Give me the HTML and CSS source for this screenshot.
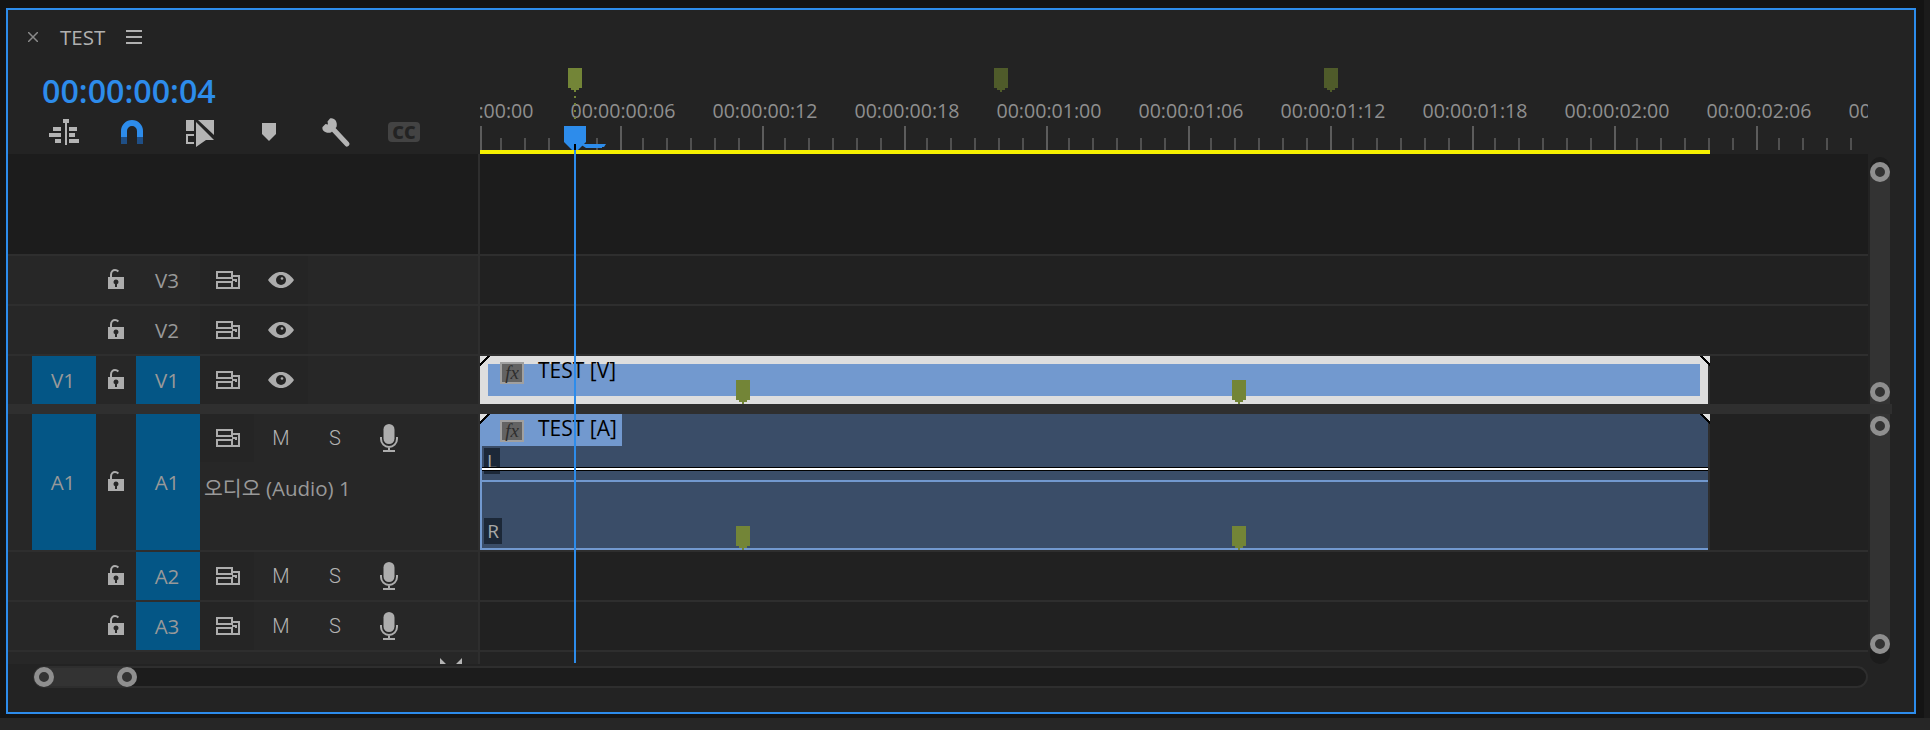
FILE: index.html
```html
<!DOCTYPE html>
<html lang="en">
<head>
    <meta charset="UTF-8">
    <meta name="viewport" content="width=device-width, initial-scale=1.0">
    <title>TEST - Timeline</title>
    <link rel="stylesheet" href="styles.css">
</head>
<body>

    <svg class="sprite" aria-hidden="true">
        <symbol id="i-lock" viewBox="0 0 16 20">
            <path d="M3 9V5.5C3 2.5 5 1 7 1c1.3 0 2.4 0.5 3.4 1.5" fill="none" stroke="currentColor" stroke-width="2"/>
            <path fill-rule="evenodd" d="M0 8h16v12H0zM8 10.5a2.5 2.5 0 0 0-1 4.8V18h2v-2.7a2.5 2.5 0 0 0-1-4.8z" fill="currentColor"/>
        </symbol>
        <symbol id="i-sync" viewBox="0 0 24 18">
            <g fill="none" stroke="currentColor" stroke-width="2">
                <rect x="1" y="1" width="15" height="6"/>
                <rect x="1" y="11" width="15" height="6"/>
                <path d="M16 5h7v12h-7M16 9h4v2"/>
            </g>
        </symbol>
        <symbol id="i-eye" viewBox="0 0 26 16">
            <path d="M0 8C4 2.5 8 0 13 0s9 2.5 13 8c-4 5.5-8 8-13 8S4 13.5 0 8z" fill="currentColor"/>
            <circle cx="13" cy="8" r="5" fill="#252525"/>
            <circle cx="14" cy="6.5" r="1.3" fill="currentColor"/>
        </symbol>
        <symbol id="i-mic" viewBox="0 0 18 28">
            <rect x="3.5" y="0" width="11" height="20" rx="5.5" fill="currentColor"/>
            <path d="M1 13v2a8 8 0 0 0 16 0v-2M9 23v4M3 27h12" fill="none" stroke="currentColor" stroke-width="2"/>
        </symbol>
    </svg>

    <div class="workspace">
        <div class="panel">

            <div class="top">
                <div class="top-left">
                    <div class="tab">
                        <svg class="tab-close" width="10" height="10" viewBox="0 0 10 10"><path d="M0 0l10 10M10 0L0 10" stroke="currentColor" stroke-width="1.5"/></svg>
                        <span class="tab-name">TEST</span>
                        <svg class="tab-menu" width="16" height="14" viewBox="0 0 16 14"><path d="M0 1h16M0 7h16M0 13h16" stroke="currentColor" stroke-width="2"/></svg>
                    </div>
                    <div class="timecode">00:00:00:04</div>
                    <div class="tools">
                        <svg class="tool" width="28" height="26" viewBox="0 0 28 26">
                            <path d="M14 0h6v4h-2v22h-2V4h-2zM4 8h8v4H4zM0 14h12v4H0zM6 20h6v4H6zM20 8h8v4h-8zM20 14h6v4h-6zM20 20h10v4H20z" transform="translate(-1 0)" fill="currentColor"/>
                        </svg>
                        <svg class="tool" width="22" height="24" viewBox="0 0 22 24">
                            <path d="M3 17V11a8 8 0 0 1 16 0v6" fill="none" stroke="#2d8ceb" stroke-width="6"/>
                            <path d="M0 17h6v7H0zM16 17h6v7h-6z" fill="#1f4f86"/>
                        </svg>
                        <svg class="tool" width="28" height="27" viewBox="0 0 28 27">
                            <path d="M0 0h8v11H0zM12 0h16v15zM10 2l18 18h-8L10 27z" fill="currentColor"/>
                            <path d="M8 15H1v8h7" fill="none" stroke="currentColor" stroke-width="2"/>
                        </svg>
                        <svg class="tool" width="14" height="18" viewBox="0 0 14 18">
                            <path d="M0 0h14v11l-7 7-7-7z" fill="currentColor"/>
                        </svg>
                        <svg class="tool" width="28" height="29" viewBox="0 0 28 29">
                            <path d="M8 0.5C12.5 -0.5 16 4 14.5 9L9 14.5C4 16 -0.5 12.5 0.5 9L3.5 6L6 6.5L5.5 3.5z" fill="currentColor"/>
                            <path d="M11 11L25 26" stroke="currentColor" stroke-width="5" stroke-linecap="round"/>
                        </svg>
                        <span class="tool-cc">CC</span>
                    </div>
                </div>

                <div class="ruler">
                    <span class="marker marker-main"></span>
                    <span class="marker-stem"></span>
                    <span class="marker marker-dim marker-b"></span>
                    <span class="marker marker-dim marker-c"></span>
                    <div class="ruler-labels">
                        <span>00:00:00:00</span>
                        <span>00:00:00:06</span>
                        <span>00:00:00:12</span>
                        <span>00:00:00:18</span>
                        <span>00:00:01:00</span>
                        <span>00:00:01:06</span>
                        <span>00:00:01:12</span>
                        <span>00:00:01:18</span>
                        <span>00:00:02:00</span>
                        <span>00:00:02:06</span>
                        <span>00:00:02:12</span>
                    </div>
                    <div class="ruler-ticks"></div>
                    <div class="work-area"></div>
                </div>
            </div>

            <div class="group">
                <div class="tracks">
                    <div class="row row-empty">
                        <div class="head"></div>
                        <div class="lane"></div>
                    </div>
                    <div class="row">
                        <div class="head">
                            <div class="src"></div>
                            <div class="lock"><svg width="16" height="20"><use href="#i-lock"/></svg></div>
                            <div class="target">V3</div>
                            <div class="ctrl ctrl-sync"><svg width="24" height="18"><use href="#i-sync"/></svg></div>
                            <div class="ctrl ctrl-dark"><svg width="26" height="16"><use href="#i-eye"/></svg></div>
                        </div>
                        <div class="lane"></div>
                    </div>
                    <div class="row">
                        <div class="head">
                            <div class="src"></div>
                            <div class="lock"><svg width="16" height="20"><use href="#i-lock"/></svg></div>
                            <div class="target">V2</div>
                            <div class="ctrl ctrl-sync"><svg width="24" height="18"><use href="#i-sync"/></svg></div>
                            <div class="ctrl ctrl-dark"><svg width="26" height="16"><use href="#i-eye"/></svg></div>
                        </div>
                        <div class="lane"></div>
                    </div>
                    <div class="row row-last">
                        <div class="head">
                            <div class="src on">V1</div>
                            <div class="lock"><svg width="16" height="20"><use href="#i-lock"/></svg></div>
                            <div class="target on">V1</div>
                            <div class="ctrl ctrl-sync"><svg width="24" height="18"><use href="#i-sync"/></svg></div>
                            <div class="ctrl ctrl-dark"><svg width="26" height="16"><use href="#i-eye"/></svg></div>
                        </div>
                        <div class="lane">
                            <div class="clip clip-video">
                                <span class="notch notch-l"></span>
                                <span class="notch notch-r"></span>
                                <div class="clip-video-fill">
                                    <span class="fx">fx</span>
                                    <span class="clip-name">TEST [V]</span>
                                </div>
                                <span class="marker clip-marker-a"></span>
                                <span class="marker clip-marker-b"></span>
                            </div>
                        </div>
                    </div>
                </div>
                <div class="vscroll vscroll-top">
                    <div class="vscroll-thumb">
                        <span class="knob"></span>
                        <span class="knob"></span>
                    </div>
                </div>
            </div>

            <div class="split"></div>

            <div class="group">
                <div class="tracks">
                    <div class="row row-a1">
                        <div class="head">
                            <div class="src on">A1</div>
                            <div class="lock"><svg width="16" height="20"><use href="#i-lock"/></svg></div>
                            <div class="target on">A1</div>
                            <div class="a1-side">
                                <div class="a1-ctrls">
                                    <div class="ctrl ctrl-sync"><svg width="24" height="18"><use href="#i-sync"/></svg></div>
                                    <div class="ctrl ctrl-text">M</div>
                                    <div class="ctrl ctrl-text">S</div>
                                    <div class="ctrl"><svg width="18" height="28"><use href="#i-mic"/></svg></div>
                                </div>
                                <div class="track-name">오디오 (Audio) 1</div>
                            </div>
                        </div>
                        <div class="lane">
                            <div class="clip clip-audio">
                                <span class="notch notch-l"></span>
                                <span class="notch notch-r"></span>
                                <div class="clip-audio-label">
                                    <span class="fx">fx</span>
                                    <span class="clip-name">TEST [A]</span>
                                </div>
                                <div class="channel channel-l">
                                    <span class="channel-tag">L</span>
                                    <span class="wave-line"></span>
                                </div>
                                <div class="channel channel-r">
                                    <span class="channel-tag">R</span>
                                </div>
                                <span class="marker clip-marker-c"></span>
                                <span class="marker clip-marker-d"></span>
                            </div>
                        </div>
                    </div>
                    <div class="row">
                        <div class="head">
                            <div class="src"></div>
                            <div class="lock"><svg width="16" height="20"><use href="#i-lock"/></svg></div>
                            <div class="target on">A2</div>
                            <div class="ctrl ctrl-sync"><svg width="24" height="18"><use href="#i-sync"/></svg></div>
                            <div class="ctrl ctrl-text">M</div>
                            <div class="ctrl ctrl-text">S</div>
                            <div class="ctrl"><svg width="18" height="28"><use href="#i-mic"/></svg></div>
                        </div>
                        <div class="lane"></div>
                    </div>
                    <div class="row">
                        <div class="head">
                            <div class="src"></div>
                            <div class="lock"><svg width="16" height="20"><use href="#i-lock"/></svg></div>
                            <div class="target on">A3</div>
                            <div class="ctrl ctrl-sync"><svg width="24" height="18"><use href="#i-sync"/></svg></div>
                            <div class="ctrl ctrl-text">M</div>
                            <div class="ctrl ctrl-text">S</div>
                            <div class="ctrl"><svg width="18" height="28"><use href="#i-mic"/></svg></div>
                        </div>
                        <div class="lane"></div>
                    </div>
                    <div class="row row-foot">
                        <div class="head">
                            <svg class="resize" width="22" height="6" viewBox="0 0 22 6"><path d="M0 0l6 6H0zM22 0v6h-6z" fill="currentColor"/></svg>
                        </div>
                        <div class="lane"></div>
                    </div>
                </div>
                <div class="vscroll vscroll-bottom">
                    <div class="vscroll-thumb">
                        <span class="knob"></span>
                        <span class="knob"></span>
                    </div>
                </div>
            </div>

            <div class="hscroll">
                <div class="hscroll-thumb">
                    <span class="knob"></span>
                    <span class="knob"></span>
                </div>
            </div>

            <!-- playhead sits over ruler and tracks -->
            <div class="playhead">
                <svg class="playhead-top" width="42" height="24" viewBox="0 0 42 24">
                    <path d="M0 0h22v16l-8 8H8l-8-8z" fill="#2d8ceb"/>
                    <path d="M16 18h26l-2 3h-2v1H22z" fill="#2d8ceb"/>
                    <path d="M10 18h2v6h-2z" fill="#000"/>
                </svg>
                <div class="playhead-line"></div>
            </div>
        </div>
    </div>
    <div class="bottom-strip"></div>

</body>
</html>
```

FILE: styles.css
```css
* {
    box-sizing: border-box;
}

body {
    margin: 0;
    width: 1930px;
    height: 730px;
    overflow: hidden;
    background: #141414;
    font-family: 'Open Sans', 'Noto Sans CJK KR', sans-serif;
    color: #a8a8a8;
}

.sprite {
    display: none;
}

.workspace {
    height: 718px;
    padding: 8px 8px 4px 6px;
    border-right: 6px solid #1b1b1b;
}

.bottom-strip {
    height: 12px;
    background: #262626;
}

.panel {
    position: relative;
    height: 706px;
    border: 2px solid #2d8ceb;
    background: #232323;
}

/* top: tab, timecode, tools, ruler */
.top {
    display: flex;
    height: 144px;
}

.top-left {
    width: 472px;
    flex: none;
}

.tab {
    display: flex;
    align-items: center;
    height: 54px;
    padding-left: 20px;
}

.tab-close {
    color: #8a8a8a;
    margin-right: 22px;
}

.tab-name {
    font-size: 20.5px;
    color: #b0b0b0;
    margin-right: 21px;
}

.tab-menu {
    color: #b0b0b0;
}

.timecode {
    height: 52px;
    line-height: 54px;
    padding-left: 34px;
    font-size: 32.2px;
    font-weight: 600;
    color: #2d8ceb;
}

.tools {
    position: relative;
    height: 32px;
    display: flex;
    align-items: center;
    padding-left: 42px;
    color: #b4b4b4;
}

.tool {
    flex: none;
    overflow: visible;
}

.tools .tool:nth-child(1) { margin-right: 43px; }
.tools .tool:nth-child(2) { margin-right: 43px; }
.tools .tool:nth-child(3) { margin-right: 48px; margin-top: 2px; }
.tools .tool:nth-child(4) { margin-right: 46px; }
.tools .tool:nth-child(5) { margin-right: 38px; }

.tool-cc {
    width: 32px;
    height: 20px;
    line-height: 20px;
    border-radius: 4px;
    background: #434343;
    color: #232323;
    font-size: 18px;
    font-weight: 800;
    text-align: center;
}

.ruler {
    position: relative;
    flex: 1;
    overflow: hidden;
    width: 1388px;
    margin-right: 46px;
    display: flex;
    flex-direction: column;
    justify-content: flex-end;
}

.ruler-labels {
    display: flex;
    height: 30px;
    line-height: 30px;
    margin-left: -70px;
    font-size: 19.6px;
    color: #8f8f8f;
    white-space: nowrap;
}

.ruler-labels span {
    flex: none;
    width: 142px;
    text-align: center;
}

.ruler-ticks {
    height: 24px;
    border-left: 2px solid #5c5c5c;
    background-image:
        linear-gradient(90deg, #5c5c5c 2px, transparent 2px),
        linear-gradient(90deg,
            transparent 22px, #505050 22px 24px,
            transparent 24px 46px, #505050 46px 48px,
            transparent 48px 70px, #505050 70px 72px,
            transparent 72px 94px, #505050 94px 96px,
            transparent 96px 118px, #505050 118px 120px,
            transparent 120px);
    background-size: 142px 24px, 142px 12px;
    background-position: 138px bottom, 138px bottom;
    background-repeat: repeat-x;
}

.work-area {
    height: 4px;
    width: 1230px;
    background: #f5f000;
}

.marker {
    position: absolute;
    width: 14px;
    height: 24px;
    background: #738537;
    clip-path: polygon(0 0, 14px 0, 14px 20px, 11px 20px, 11px 22px, 8px 22px, 8px 24px, 6px 24px, 6px 22px, 3px 22px, 3px 20px, 0 20px);
}

.marker-main { left: 88px; top: 58px; }
.marker-dim { top: 58px; background: #4f5b2a; }
.marker-b { left: 514px; }
.marker-c { left: 844px; }

.marker-stem {
    position: absolute;
    left: 94px;
    top: 86px;
    width: 2px;
    height: 28px;
    background: repeating-linear-gradient(180deg, #738537 0 2px, transparent 2px 7px);
}

/* track groups */
.group {
    display: flex;
    height: 250px;
}

.tracks {
    width: 1860px;
    flex: none;
}

.row {
    display: flex;
    height: 50px;
    border-bottom: 2px solid #2e2e2e;
}

.row-empty {
    height: 102px;
}

.row-empty .head,
.row-empty .lane {
    background: #1c1c1c;
}

.row-last {
    height: 48px;
    border-bottom: none;
}

.row-a1 {
    height: 138px;
}

.row-foot {
    height: 12px;
    border-bottom: none;
}

.row-foot .lane {
    background: #232323;
}

.head {
    display: flex;
    flex: none;
    width: 472px;
    padding-left: 24px;
    background: #272727;
    border-right: 2px solid #2e2e2e;
    font-size: 20.5px;
    color: #999;
}

.lane {
    flex: 1;
    background: #212121;
}

.src,
.target {
    display: flex;
    align-items: center;
    justify-content: center;
    flex: none;
    width: 64px;
    padding-right: 2px;
}

.on {
    background: #045686;
}

.lock {
    display: flex;
    align-items: center;
    justify-content: center;
    flex: none;
    width: 40px;
    color: #adadad;
}

.lock svg {
    margin-top: -2px;
}

.ctrl {
    display: flex;
    align-items: center;
    justify-content: center;
    flex: none;
    width: 54px;
    color: #adadad;
}

.ctrl-sync {
    padding-left: 2px;
    background: #252525;
}

.ctrl-dark {
    background: #252525;
}

.ctrl-text {
    font-family: Roboto, sans-serif;
    font-weight: 300;
    font-size: 20px;
    color: #b4b4b4;
}

.a1-side {
    display: flex;
    flex-direction: column;
}

.a1-ctrls {
    display: flex;
    height: 48px;
}

.track-name {
    margin-top: 13px;
    padding-left: 4px;
    line-height: 26px;
    font-size: 20.5px;
    white-space: nowrap;
}

.resize {
    position: absolute;
    left: 432px;
    margin-top: 6px;
    color: #b4b4b4;
}

/* clips */
.clip {
    position: relative;
    width: 1230px;
    height: 100%;
    border-right: 2px solid #2e2e2e;
}

.clip-video {
    padding: 8px;
    background: #dedede;
}

.clip-video-fill {
    display: flex;
    height: 32px;
    background: #7299cf;
}

.clip-video-fill .fx {
    margin-left: 12px;
    margin-top: -2px;
}

.clip-audio {
    background: #3a4d68;
    border-left: 2px solid #7299cf;
}

.clip-audio-label {
    display: flex;
    width: 140px;
    height: 32px;
    padding-left: 18px;
    background: #7299cf;
}

.fx {
    flex: none;
    width: 24px;
    height: 22px;
    margin-top: 6px;
    border: 2px solid #a0a0a0;
    background: #636363;
    color: #2e2e2e;
    font-family: 'Liberation Serif', serif;
    font-style: italic;
    font-size: 19px;
    line-height: 17px;
    text-align: center;
}

.clip-name {
    margin-left: 14px;
    font-size: 21px;
    line-height: 26px;
    color: #000;
    white-space: nowrap;
}

.clip-video-fill .clip-name {
    margin-top: -7px;
}

.clip-audio-label .clip-name {
    margin-top: 1px;
}

.channel {
    position: relative;
    display: flex;
}

.channel-l {
    height: 36px;
    padding: 2px 0 0 2px;
    border-bottom: 2px solid #7299cf;
}

.channel-r {
    height: 68px;
    padding: 36px 0 0 2px;
    border-bottom: 2px solid #7299cf;
}

.channel-tag {
    width: 18px;
    height: 26px;
    background: #1c2838;
    color: #a8a8a8;
    font-size: 19px;
    line-height: 26px;
    text-align: center;
}

.channel-l .channel-tag {
    width: 16px;
}

.wave-line {
    position: absolute;
    left: 0;
    right: 0;
    top: 21px;
    height: 4px;
    background: linear-gradient(#000 1px, #fff 1px 3px, #000 3px);
}

.notch {
    position: absolute;
    top: 0;
    width: 10px;
    height: 10px;
    z-index: 1;
}

.notch-l {
    left: 0;
    background: linear-gradient(135deg, #dedede 5.5px, #000 5.5px 7.5px, transparent 7.5px);
}

.notch-r {
    right: -2px;
    background: linear-gradient(225deg, #dedede 5.5px, #000 5.5px 7.5px, transparent 7.5px);
}

.clip-audio .notch-l {
    left: -2px;
}

.clip-marker-a { left: 256px; top: 24px; }
.clip-marker-b { left: 752px; top: 24px; }
.clip-marker-c { left: 254px; top: 112px; }
.clip-marker-d { left: 750px; top: 112px; }

/* scrollbars */
.knob {
    flex: none;
    width: 20px;
    height: 20px;
    border: 5px solid #8f8f8f;
    border-radius: 50%;
    background: #333;
}

.vscroll {
    flex: none;
    width: 20px;
    margin-left: 2px;
    display: flex;
    background: #1c1c1c;
}

.vscroll-thumb {
    flex: 1;
    display: flex;
    flex-direction: column;
    justify-content: space-between;
    background: #333;
    border-radius: 10px;
}

.vscroll-top {
    margin-top: 3px;
    padding-top: 5px;
    border-radius: 10px 10px 0 0;
}

.vscroll-top .vscroll-thumb {
    padding-bottom: 2px;
    border-bottom-left-radius: 0;
    border-bottom-right-radius: 0;
}

.vscroll-bottom {
    padding-bottom: 10px;
    border-radius: 0 0 10px 10px;
}

.vscroll-bottom .vscroll-thumb {
    padding-top: 2px;
    border-top-left-radius: 0;
    border-top-right-radius: 0;
}

.split {
    width: 1884px;
    height: 10px;
    background: #2f2f2f;
}

.hscroll {
    width: 1835px;
    height: 22px;
    margin: 2px 0 0 25px;
    border: 2px solid #2e2e2e;
    border-radius: 11px;
    background: #1c1c1c;
}

.hscroll-thumb {
    display: flex;
    justify-content: space-between;
    align-items: center;
    width: 103px;
    height: 18px;
    margin-left: -1px;
    background: #333;
    border-radius: 9px;
}

.playhead {
    position: absolute;
    left: 556px;
    top: 116px;
    width: 42px;
    height: 537px;
}

.playhead-top {
    display: block;
}

.playhead-line {
    width: 2px;
    height: 513px;
    margin-left: 10px;
    background: #2d8ceb;
}
```
